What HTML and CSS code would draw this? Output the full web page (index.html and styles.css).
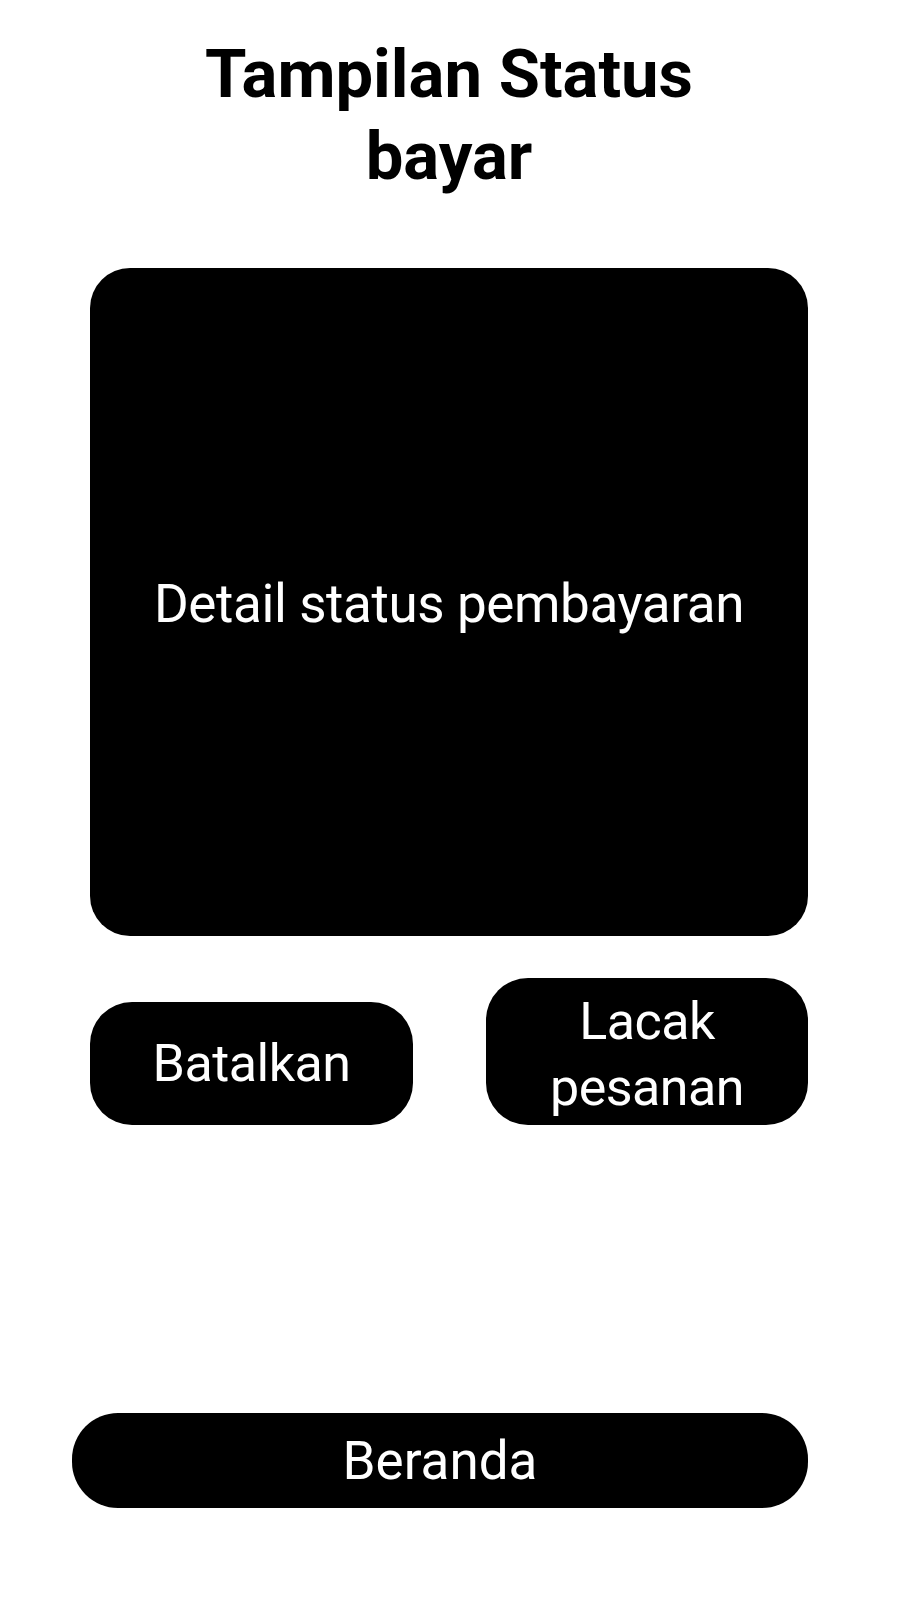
FILE: index.html
```html
<!DOCTYPE html>
<html lang="id">

<head>
    <meta charset="UTF-8">
    <meta name="viewport" content="width=device-width, initial-scale=1.0">
    <title>Tampilan Status bayar</title>
    <link rel="stylesheet" href="styles.css">
</head>

<body>
    <div class="page">
        <h1 class="title">Tampilan Status<br>bayar</h1>
        <div class="detailBx">
            <p>Detail status pembayaran</p>
        </div>
        <div class="btnRow">
            <button class="btn cancel">Batalkan</button>
            <button class="btn track">Lacak<br>pesanan</button>
        </div>
        <button class="btn home">Beranda</button>
    </div>
</body>

</html>
```

FILE: styles.css
```css
* {
    margin: 0;
    padding: 0;
    box-sizing: border-box;
}

body {
    background-color: #ffffff;
    font-family: Roboto, "Noto Sans", sans-serif;
    color: #000000;
}

.page {
    display: flex;
    flex-direction: column;
    width: 718px;
    margin-left: 90px;
    padding-top: 33px;
}

.title {
    font-size: 67px;
    font-weight: bold;
    line-height: 82px;
    text-align: center;
    letter-spacing: 0;
}

.detailBx {
    display: flex;
    align-items: center;
    justify-content: center;
    height: 668px;
    margin-top: 71px;
    background-color: #000000;
    border-radius: 40px;
}

.detailBx p {
    color: #ffffff;
    font-size: 53px;
    letter-spacing: -0.4px;
    padding-top: 4px;
}

.btnRow {
    display: flex;
    align-items: flex-end;
    justify-content: space-between;
    margin-top: 42px;
}

.btn {
    border: none;
    background-color: #000000;
    color: #ffffff;
    font-family: Roboto, "Noto Sans", sans-serif;
    font-size: 52px;
    letter-spacing: -0.5px;
    cursor: pointer;
}

.cancel {
    width: 323px;
    height: 123px;
    border-radius: 42px;
}

.track {
    width: 322px;
    height: 147px;
    border-radius: 42px;
    line-height: 66px;
    padding-top: 6px;
}

.home {
    width: 736px;
    height: 95px;
    margin: 288px 0 0 -18px;
    border-radius: 46px;
    letter-spacing: 0;
    font-size: 53px;
}
```
